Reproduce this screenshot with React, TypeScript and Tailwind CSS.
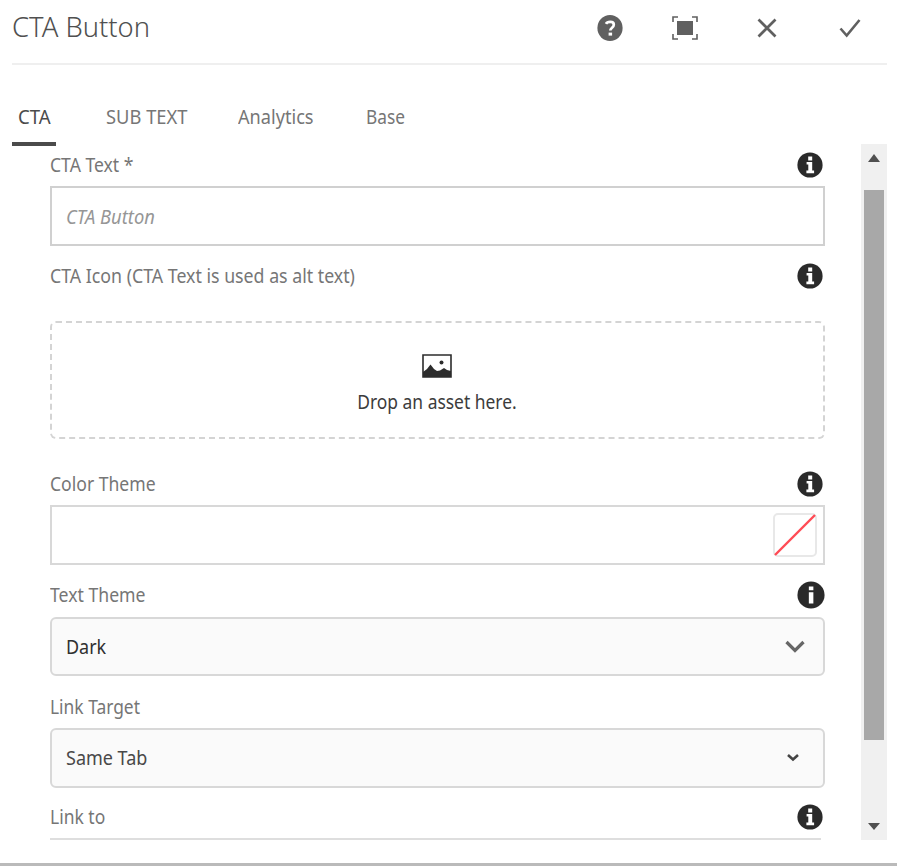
import type { ReactNode } from "react";

function InfoIcon({ large = false }: { large?: boolean }) {
  return (
    <svg viewBox="0 0 26 26" className={large ? "-mr-[2px] h-7 w-7" : "h-[26px] w-[26px]"}>
      <circle cx="13" cy="13" r="12.6" fill="#2a2a2a" />
      {large ? (
        <path d="M11 5h4.2v3.6H11zM11 10.4h4.2v10.4H11z" fill="#fff" />
      ) : (
        <path d="M11.2 4.6h4v3.8h-4zM9.6 10h5.6v8.6h1.9v2.6H9.4v-2.6h1.9v-6H9.6z" fill="#fff" />
      )}
    </svg>
  );
}

function Label({ children, className, scale, info }: { children: ReactNode; className: string; scale: string; info?: "normal" | "large" }) {
  return (
    <div className={`flex shrink-0 items-center justify-between pr-[2px] ${className}`}>
      <span className={`origin-left whitespace-nowrap text-[#767676] ${scale}`}>{children}</span>
      {info && <InfoIcon large={info === "large"} />}
    </div>
  );
}

export default function App() {
  return (
    <div className="flex h-[866px] w-[897px] flex-col overflow-hidden bg-white font-['Noto_Sans',sans-serif] text-[19px] leading-6">
      <header className="ml-3 mr-[10px] flex h-[65px] shrink-0 items-start justify-between border-b-2 border-[#efefef]">
        <h1 className="mt-2 origin-left scale-x-[0.977] whitespace-nowrap text-[28px] font-light leading-9 text-[#505050]">CTA Button</h1>
        <div className="mr-[26px] mt-[14px] flex items-center text-[#606060]">
          <svg viewBox="0 0 26 28" className="mr-[49px] h-7 w-[26px]">
            <ellipse cx="13" cy="14" rx="12.6" ry="13" fill="currentColor" />
            <path d="M9 9.8C10.2 7.5 16.8 6.8 16.8 10.7c0 3-3.5 3-3.5 5.9" fill="none" stroke="#fff" strokeWidth="2.7" />
            <path d="M11.6 18.6h3.5v3h-3.5z" fill="#fff" />
          </svg>
          <svg viewBox="0 0 26 24" className="mr-[59px] h-6 w-[26px]">
            <path d="M1 6V1h5M20 1h5v5M25 18v5h-5M6 23H1v-5" fill="none" stroke="currentColor" strokeWidth="1.6" />
            <path d="M5 5h16v14H5z" fill="currentColor" />
          </svg>
          <svg viewBox="0 0 20 20" className="mr-[62px] h-5 w-5">
            <path d="M1.5 1.5l17 17M18.5 1.5l-17 17" stroke="currentColor" strokeWidth="2.7" />
          </svg>
          <svg viewBox="0 0 22 20" className="h-5 w-[22px]">
            <path d="M1.5 10.5l6.2 7L20.5 2" fill="none" stroke="currentColor" strokeWidth="2.6" />
          </svg>
        </div>
      </header>
      <nav className="ml-3 flex h-[79px] shrink-0 items-end text-[#767676]">
        <div className="relative h-[39px] w-[94px] text-[#4b4b4b]">
          <span className="ml-[6px] inline-block origin-left scale-x-[0.98]">CTA</span>
          <div className="absolute left-0 top-[37px] h-1 w-11 bg-[#4b4b4b]" />
        </div>
        <div className="h-[39px] w-[132px]"><span className="inline-block origin-left scale-x-[0.965] whitespace-nowrap">SUB TEXT</span></div>
        <div className="h-[39px] w-[128px]"><span className="inline-block origin-left scale-x-[0.955]">Analytics</span></div>
        <div className="h-[39px]"><span className="inline-block origin-left scale-x-[0.91]">Base</span></div>
      </nav>
      <main className="flex h-[696px] shrink-0">
        <form className="ml-[50px] flex w-[775px] flex-col">
          <Label className="h-[42px]" scale="scale-x-[0.925]" info="normal">CTA Text *</Label>
          <div className="flex h-[60px] shrink-0 items-center border-2 border-[#d0d0d0] px-[14px] pt-[2px]">
            <span className="origin-left scale-x-[0.965] italic text-[#969696]">CTA Button</span>
          </div>
          <Label className="mb-[15px] h-[60px]" scale="scale-x-[0.934]" info="normal">CTA Icon (CTA Text is used as alt text)</Label>
          <div className="flex h-[118px] shrink-0 flex-col items-center rounded-md border-2 border-dashed border-[#d4d4d4] pr-[2px] pt-[31px]">
            <svg viewBox="0 0 30 24" className="h-6 w-[30px]">
              <path d="M1 1h28v22H1z" fill="#fff" stroke="#2c2c2c" strokeWidth="1.6" />
              <path d="M1 18l4-3 3.5-4.5L12 15l3 2 3-.5 4-2.5 3 2 4 1v6H1z" fill="#2c2c2c" />
              <circle cx="19.5" cy="8.5" r="2" fill="#2c2c2c" />
            </svg>
            <span className="mt-3 scale-x-[0.917] whitespace-nowrap text-[#3c3c3c]">Drop an asset here.</span>
          </div>
          <Label className="h-[66px] pt-[24px]" scale="scale-x-[0.925]" info="normal">Color Theme</Label>
          <div className="flex h-[60px] shrink-0 items-center justify-end border-2 border-[#d8d8d8] pr-[6px]">
            <svg viewBox="0 0 44 44" className="h-11 w-11">
              <rect x="1" y="1" width="42" height="42" rx="4" fill="#fff" stroke="#e8e8e8" strokeWidth="2" />
              <path d="M2 42L42 2" stroke="#ff4b55" strokeWidth="2.4" />
            </svg>
          </div>
          <Label className="h-[52px] pt-2" scale="scale-x-[0.928]" info="large">Text Theme</Label>
          <div className="flex h-[59px] shrink-0 items-center justify-between rounded-md border-2 border-[#d8d8d8] bg-[#fafafa] pl-[14px] pr-[18px]">
            <span className="origin-left scale-x-[0.945] text-[#303030]">Dark</span>
            <svg viewBox="0 0 20 13" className="h-[13px] w-5"><path d="M1.5 2l8.5 8.5L18.5 2" fill="none" stroke="#666" strokeWidth="3.2" /></svg>
          </div>
          <Label className="h-[52px] pt-[10px]" scale="scale-x-[0.915]">Link Target</Label>
          <div className="flex h-[60px] shrink-0 items-center justify-between rounded-md border-2 border-[#d8d8d8] bg-[#fafafa] pl-[14px] pr-6">
            <span className="origin-left scale-x-[0.947] whitespace-nowrap text-[#484848]">Same Tab</span>
            <svg viewBox="0 0 12 8" className="h-2 w-3"><path d="M1 1l5 4.5L11 1" fill="none" stroke="#444" strokeWidth="2.6" /></svg>
          </div>
          <Label className="h-[50px] pt-2" scale="scale-x-[0.92]" info="normal">Link to</Label>
          <div className="mr-1 h-[2px] bg-[#dedede]" />
        </form>
        <div className="ml-9 flex w-[26px] flex-col items-center bg-[#f0f0f0]">
          <svg viewBox="0 0 12 8" className="mb-[28px] mt-[10px] h-2 w-3 shrink-0"><path d="M0 8l6-8 6 8z" fill="#505050" /></svg>
          <div className="h-[550px] w-5 shrink-0 bg-[#a8a8a8]" />
          <svg viewBox="0 0 12 7" className="mt-[83px] h-[7px] w-3 shrink-0"><path d="M0 0h12L6 7z" fill="#505050" /></svg>
        </div>
      </main>
      <div className="mt-auto h-[3px] shrink-0 bg-[#bababa]" />
    </div>
  );
}
